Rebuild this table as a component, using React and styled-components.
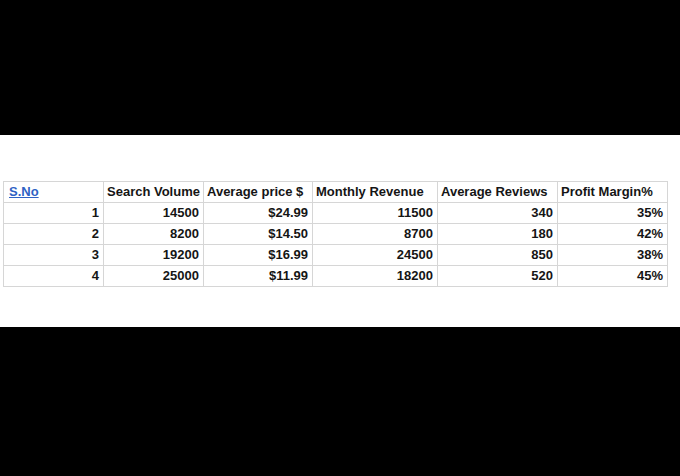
import React from "react";
import styled, { createGlobalStyle } from "styled-components";

const GlobalStyle = createGlobalStyle`
  html, body {
    margin: 0;
    padding: 0;
    background: #000;
  }
  body {
    font-family: "Liberation Sans", Arial, sans-serif;
  }
`;

const Page = styled.div`
  display: flex;
  flex-direction: column;
  width: 680px;
  height: 476px;
  background: #000;
`;

const Band = styled.div`
  background: #000;
  height: ${(p) => p.$height}px;
  flex-shrink: 0;
`;

const Sheet = styled.div`
  background: #fff;
  height: 192px;
  flex-shrink: 0;
  padding: 46px 0 0 3px;
  box-sizing: border-box;
`;

const Table = styled.table`
  border-collapse: collapse;
  table-layout: fixed;
  font-family: "Liberation Sans", Arial, sans-serif;
  font-size: 13px;
  font-weight: bold;
  color: #151515;
`;

const HeadCell = styled.th`
  height: 20px;
  padding: 0 3px;
  border: 1px solid #d6d6d6;
  text-align: left;
  font-weight: bold;
  white-space: nowrap;
  overflow: hidden;
  vertical-align: middle;
  line-height: 20px;
`;

const Cell = styled.td`
  height: 20px;
  padding: 0 4px 0 3px;
  border: 1px solid #d6d6d6;
  text-align: right;
  white-space: nowrap;
  vertical-align: middle;
  line-height: 20px;
`;

const LinkText = styled.a`
  margin-left: 2px;
  color: #2f62c4;
  text-decoration: underline;
  cursor: pointer;
`;

const widths = [100, 100, 109, 125, 120, 110];

const headers = [
  "Search Volume",
  "Average price $",
  "Monthly Revenue",
  "Average Reviews",
  "Profit Margin%",
];

const rows = [
  [1, "14500", "$24.99", "11500", "340", "35%"],
  [2, "8200", "$14.50", "8700", "180", "42%"],
  [3, "19200", "$16.99", "24500", "850", "38%"],
  [4, "25000", "$11.99", "18200", "520", "45%"],
];

export default function App() {
  return (
    <Page>
      <GlobalStyle />
      <Band $height={135} />
      <Sheet>
        <Table>
          <colgroup>
            {widths.map((w, i) => (
              <col key={i} style={{ width: w }} />
            ))}
          </colgroup>
          <thead>
            <tr>
              <HeadCell>
                <LinkText>S.No</LinkText>
              </HeadCell>
              {headers.map((h) => (
                <HeadCell key={h}>{h}</HeadCell>
              ))}
            </tr>
          </thead>
          <tbody>
            {rows.map((row) => (
              <tr key={row[0]}>
                {row.map((v, i) => (
                  <Cell key={i}>{v}</Cell>
                ))}
              </tr>
            ))}
          </tbody>
        </Table>
      </Sheet>
      <Band $height={149} />
    </Page>
  );
}
